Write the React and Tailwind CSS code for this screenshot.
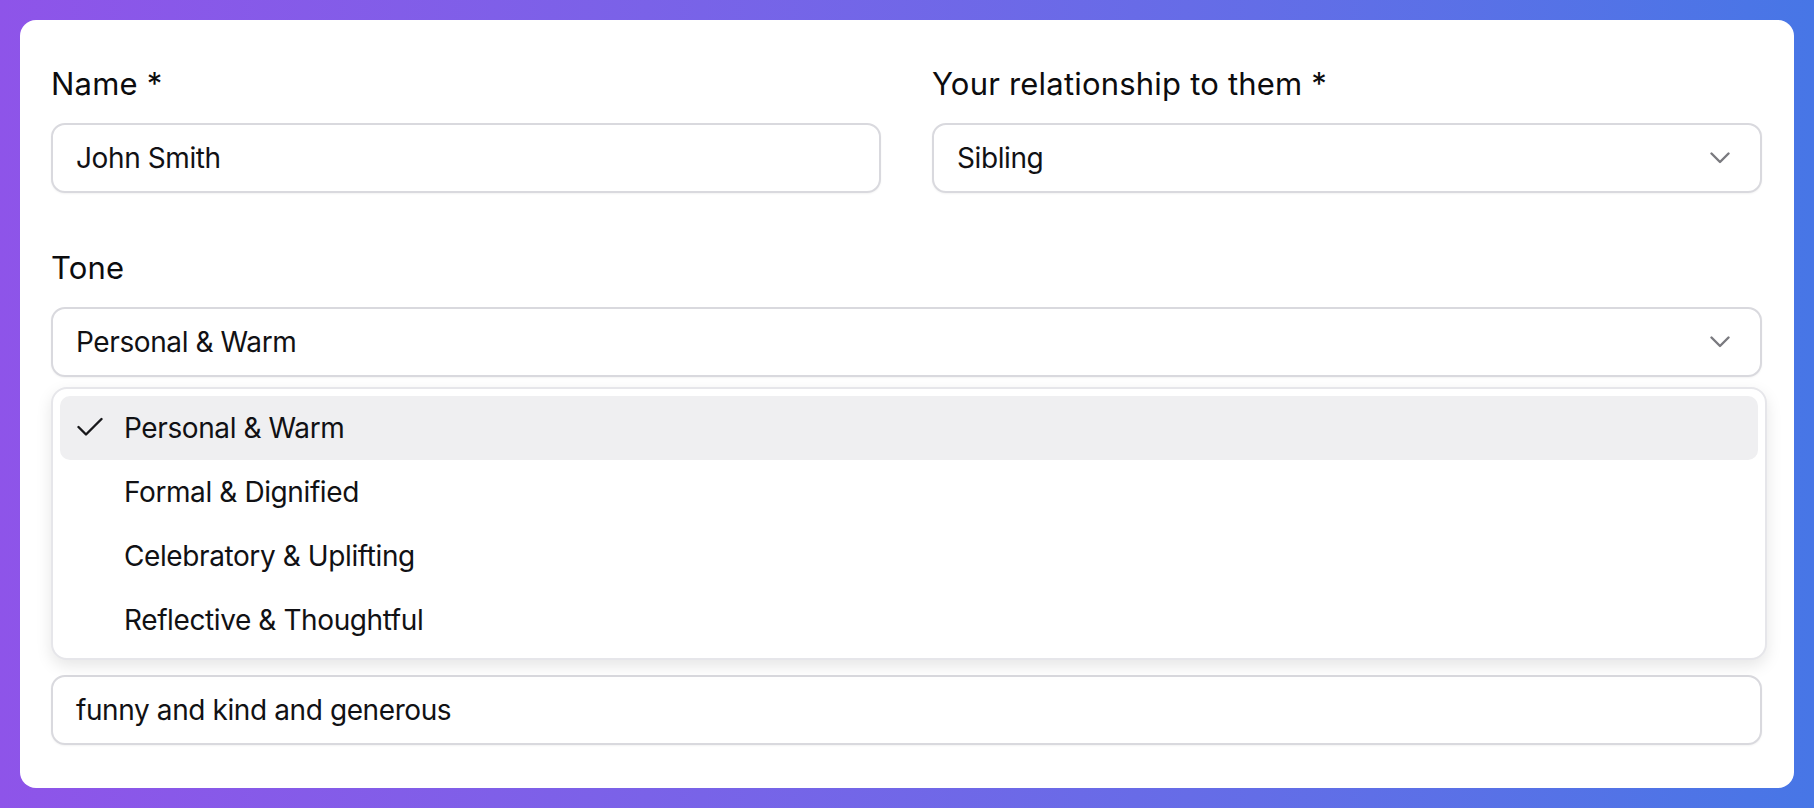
import React from "react";

function Chevron() {
  return (
    <svg width="20" height="12" viewBox="0 0 20 12" fill="none" className="shrink-0">
      <path d="M1.5 1.5 L10 10 L18.5 1.5" stroke="#7a7a7f" strokeWidth="2.4" strokeLinecap="round" strokeLinejoin="round" />
    </svg>
  );
}

function Check() {
  return (
    <svg width="26" height="20" viewBox="0 0 26 20" fill="none">
      <path d="M1.5 10 L9 17.5 L24.5 2" stroke="#18181b" strokeWidth="2.4" strokeLinecap="round" strokeLinejoin="round" />
    </svg>
  );
}

function Label({ children }) {
  return (
    <div className="text-[31px] leading-[36px] font-normal tracking-[0.2px] text-[#0c0c0e] mb-[21px]">{children}</div>
  );
}

function Field({ children, select }) {
  return (
    <div className="h-[70px] border-2 border-[#d9d9de] rounded-[14px] pl-[23px] pr-[30px] flex items-center justify-between text-[28px] tracking-[-0.4px] text-[#111114] shadow-[0_1px_2px_rgba(0,0,0,0.05)] bg-white">
      <span>{children}</span>
      {select ? <Chevron /> : null}
    </div>
  );
}

export default function App() {
  const items = ["Personal & Warm", "Formal & Dignified", "Celebratory & Uplifting", "Reflective & Thoughtful"];
  return (
    <div
      className="w-full h-[808px] p-[20px] bg-gradient-to-r from-[#8e54e9] to-[#4776e6]"
      style={{ fontFamily: "Inter, 'Noto Sans', sans-serif" }}
    >
      <div className="relative bg-white rounded-[16px] h-full pl-[31px] pr-[32px] pt-[46px]">
        <div className="grid grid-cols-2 gap-x-[51px]">
          <div>
            <Label>Name *</Label>
            <Field>John Smith</Field>
          </div>
          <div>
            <Label>Your relationship to them *</Label>
            <Field select>Sibling</Field>
          </div>
        </div>
        <div className="mt-[57px]">
          <Label>Tone</Label>
          <Field select>Personal &amp; Warm</Field>
        </div>
        <div className="mt-[298px]">
          <Field>funny and kind and generous</Field>
        </div>

        <div className="absolute left-[31px] right-[27px] top-[367px] h-[273px] bg-white border-2 border-[#e6e6ea] rounded-[16px] p-[7px] shadow-[0_6px_16px_rgba(0,0,0,0.10)]">
          {items.map((t, i) => (
            <div
              key={t}
              className={
                i === 0
                  ? "relative h-[64px] flex items-center pl-[64px] rounded-[10px] bg-[#efeff1] text-[28px] tracking-[-0.4px] text-[#111114]"
                  : "relative h-[64px] flex items-center pl-[64px] rounded-[10px] text-[28px] tracking-[-0.4px] text-[#111114]"
              }
            >
              {i === 0 ? (
                <span className="absolute left-[17px] top-[21px]">
                  <Check />
                </span>
              ) : null}
              {t}
            </div>
          ))}
        </div>
      </div>
    </div>
  );
}
